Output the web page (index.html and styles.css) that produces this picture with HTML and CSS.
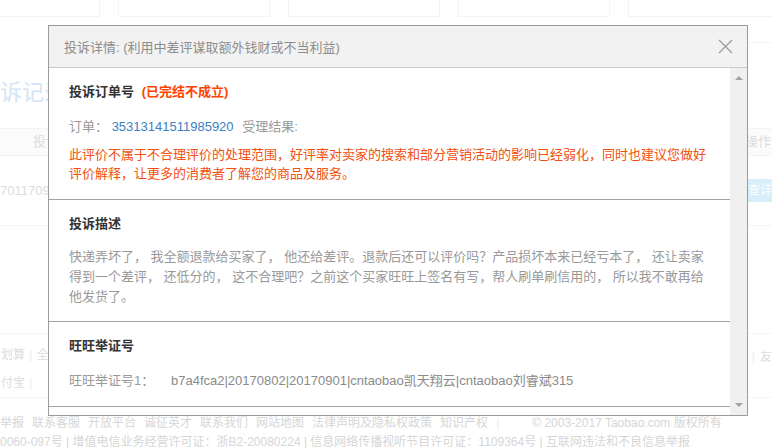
FILE: index.html
```html
<!DOCTYPE html>
<html lang="zh-CN">
<head>
    <meta charset="UTF-8">
    <title>投诉详情</title>
    <link rel="stylesheet" href="styles.css">
</head>
<body>
    <div class="page">
        <div class="tabs">
            <div class="tab"></div>
            <div class="tab"></div>
            <div class="tab"></div>
            <div class="tab"></div>
            <div class="tab"></div>
        </div>
        <div class="top-rule"></div>
        <h1 class="page-title">诉记录</h1>
        <div class="table-head">
            <span class="th-left">投诉</span>
            <span class="th-right">操作</span>
        </div>
        <div class="table-row">
            <span class="td-left">70117090</span>
            <span class="td-btn">查详</span>
        </div>
        <div class="rule"></div>
        <div class="links">
            <div class="links-left">
                <p>划算 <i>|</i> 全</p>
                <p>付宝 <i>|</i></p>
            </div>
            <div class="links-right"><i>|</i>友</div>
        </div>
        <div class="footer">
            <p class="foot-links">
                <span>举报</span><span>联系客服</span><span>开放平台</span><span>诚征英才</span><span>联系我们</span><span>网站地图</span><span>法律声明及隐私权政策</span><span>知识产权</span><i>|</i><span class="copy">© 2003-2017 Taobao.com 版权所有</span>
            </p>
            <p class="foot-licence">0060-097号 | 增值电信业务经营许可证：浙B2-20080224 | 信息网络传播视听节目许可证：1109364号 | 互联网违法和不良信息举报</p>
        </div>
    </div>

    <div class="dialog">
        <div class="dialog-head">
            <span class="dialog-title">投诉详情: (利用中差评谋取额外钱财或不当利益)</span>
            <svg class="close" width="15" height="15" viewBox="0 0 15 15">
                <path d="M1 1L14 14M14 1L1 14" stroke="#9a9a9a" stroke-width="1.2" fill="none"/>
            </svg>
        </div>
        <div class="dialog-body">
            <div class="dialog-content">
                <div class="section">
                    <h3>投诉订单号 <em class="status">(已完结不成立)</em></h3>
                    <p class="order">订单： <a class="order-no">35313141511985920</a> <span class="result">受理结果:</span></p>
                    <p class="verdict">此评价不属于不合理评价的处理范围，好评率对卖家的搜索和部分营销活动的影响已经弱化，同时也建议您做好评价解释，让更多的消费者了解您的商品及服务。</p>
                </div>
                <div class="section">
                    <h3>投诉描述</h3>
                    <p class="desc">快递弄坏了， 我全额退款给买家了， 他还给差评。退款后还可以评价吗？产品损坏本来已经亏本了， 还让卖家得到一个差评， 还低分的， 这不合理吧？之前这个买家旺旺上签名有写，帮人刷单刷信用的， 所以我不敢再给他发货了。</p>
                </div>
                <div class="section">
                    <h3>旺旺举证号</h3>
                    <p class="proof"><span class="proof-label">旺旺举证号1：</span><span class="proof-value">b7a4fca2|20170802|20170901|cntaobao凯天翔云|cntaobao刘睿斌315</span></p>
                </div>
            </div>
            <div class="scrollbar">
                <span class="arrow-up"></span>
                <span class="arrow-down"></span>
            </div>
        </div>
    </div>
</body>
</html>
```

FILE: styles.css
```css
* {
    margin: 0;
    padding: 0;
    box-sizing: border-box;
}

body {
    font-family: 'Liberation Sans', 'Noto Sans CJK SC', sans-serif;
    font-size: 13px;
    color: #333;
    background-color: #ffffff;
    width: 772px;
    height: 448px;
    overflow: hidden;
}

i {
    font-style: normal;
}

/* faded page behind the dialog */
.page {
    color: #dcdcdc;
    font-size: 12px;
}

.tabs {
    display: flex;
    gap: 18px;
    margin-left: -52px;
}

.tab {
    flex: 0 0 152px;
    height: 17px;
    border: 1px solid #f4f4f4;
    border-top: none;
}

.top-rule {
    height: 1px;
    margin: 25px 0 0 748px;
    background-color: #f4f4f4;
}

.page-title {
    font-size: 22px;
    font-weight: normal;
    color: #d4e4f4;
    line-height: 30px;
    margin-top: 35px;
    white-space: nowrap;
}

.table-head {
    display: flex;
    justify-content: space-between;
    height: 28px;
    line-height: 26px;
    margin-top: 20px;
    background-color: #fbfbfb;
    border-top: 1px solid #f3f3f3;
    border-bottom: 1px solid #f3f3f3;
    font-size: 13px;
}

.th-left {
    margin-left: 33px;
}

.th-right {
    margin-right: 1px;
}

.table-row {
    display: flex;
    justify-content: space-between;
    align-items: center;
    height: 70px;
    border-bottom: 1px solid #f5f5f5;
}

.td-left {
    font-size: 13px;
}

.td-btn {
    width: 26px;
    padding-left: 2px;
    line-height: 23px;
    background-color: #d7eefb;
    color: #ffffff;
}

.rule {
    height: 1px;
    margin-top: 107px;
    background-color: #f5f5f5;
}

.links {
    display: flex;
    justify-content: space-between;
    padding-top: 7px;
    height: 64px;
    border-bottom: 1px solid #f5f5f5;
}

.links-left p {
    line-height: 28px;
    margin-left: 1px;
}

.links-left i {
    color: #eeeeee;
    margin: 0 1px;
}

.links-right {
    margin-top: 4px;
    line-height: 24px;
    white-space: nowrap;
}

.links-right i {
    color: #eeeeee;
    margin-right: 5px;
}

.footer {
    padding-top: 16px;
    white-space: nowrap;
    color: #d6d6d6;
}

.foot-links {
    display: flex;
    gap: 8px;
    line-height: 18px;
}

.foot-links i {
    color: #eeeeee;
    margin-right: 25px;
}

.foot-licence {
    margin-top: 4px;
    line-height: 12px;
}

/* dialog */
.dialog {
    position: absolute;
    left: 48px;
    top: 25px;
    width: 700px;
    height: 391px;
    background-color: #ffffff;
    border: 1px solid #9b9b9b;
    display: flex;
    flex-direction: column;
}

.dialog-head {
    display: flex;
    align-items: center;
    justify-content: space-between;
    height: 42px;
    padding: 0 15px;
    background-color: #f2f2f2;
    border-bottom: 1px solid #c9c9c9;
}

.dialog-title {
    color: #8d8d8d;
    font-size: 13px;
}

.close {
    margin-right: -1px;
}

.dialog-body {
    flex: 1;
    display: flex;
    overflow: hidden;
}

.dialog-content {
    flex: 1;
    overflow: hidden;
}

.section {
    padding: 14px 20px 15px;
    border-bottom: 1px solid #a3a3a3;
}

.section:first-child {
    padding-bottom: 16px;
}

.section:nth-child(2) {
    padding-bottom: 14px;
}

.section h3 {
    font-size: 13px;
    font-weight: bold;
    line-height: 20px;
    color: #333;
}

.status {
    font-style: normal;
    color: #f40;
    margin-left: 4px;
}

.order {
    margin-top: 15px;
    line-height: 20px;
    color: #999;
}

.order-no {
    color: #3d80c4;
    margin-right: 5px;
}

.verdict {
    margin-top: 8px;
    line-height: 19px;
    color: #f2500f;
}

.desc {
    margin-top: 13px;
    line-height: 20px;
    color: #999;
}

.proof {
    margin-top: 15px;
    line-height: 20px;
    color: #999;
}

.proof-label {
    display: inline-block;
    width: 102px;
}

.proof-value {
    color: #8a8a8a;
}

.scrollbar {
    flex: 0 0 17px;
    position: relative;
    background-color: #f0f0f0;
}

.arrow-up,
.arrow-down {
    position: absolute;
    left: 5px;
    width: 0;
    height: 0;
    border-left: 4px solid transparent;
    border-right: 4px solid transparent;
}

.arrow-up {
    top: 8px;
    border-bottom: 4px solid #a3a3a3;
}

.arrow-down {
    bottom: 8px;
    border-top: 4px solid #a3a3a3;
}
```
